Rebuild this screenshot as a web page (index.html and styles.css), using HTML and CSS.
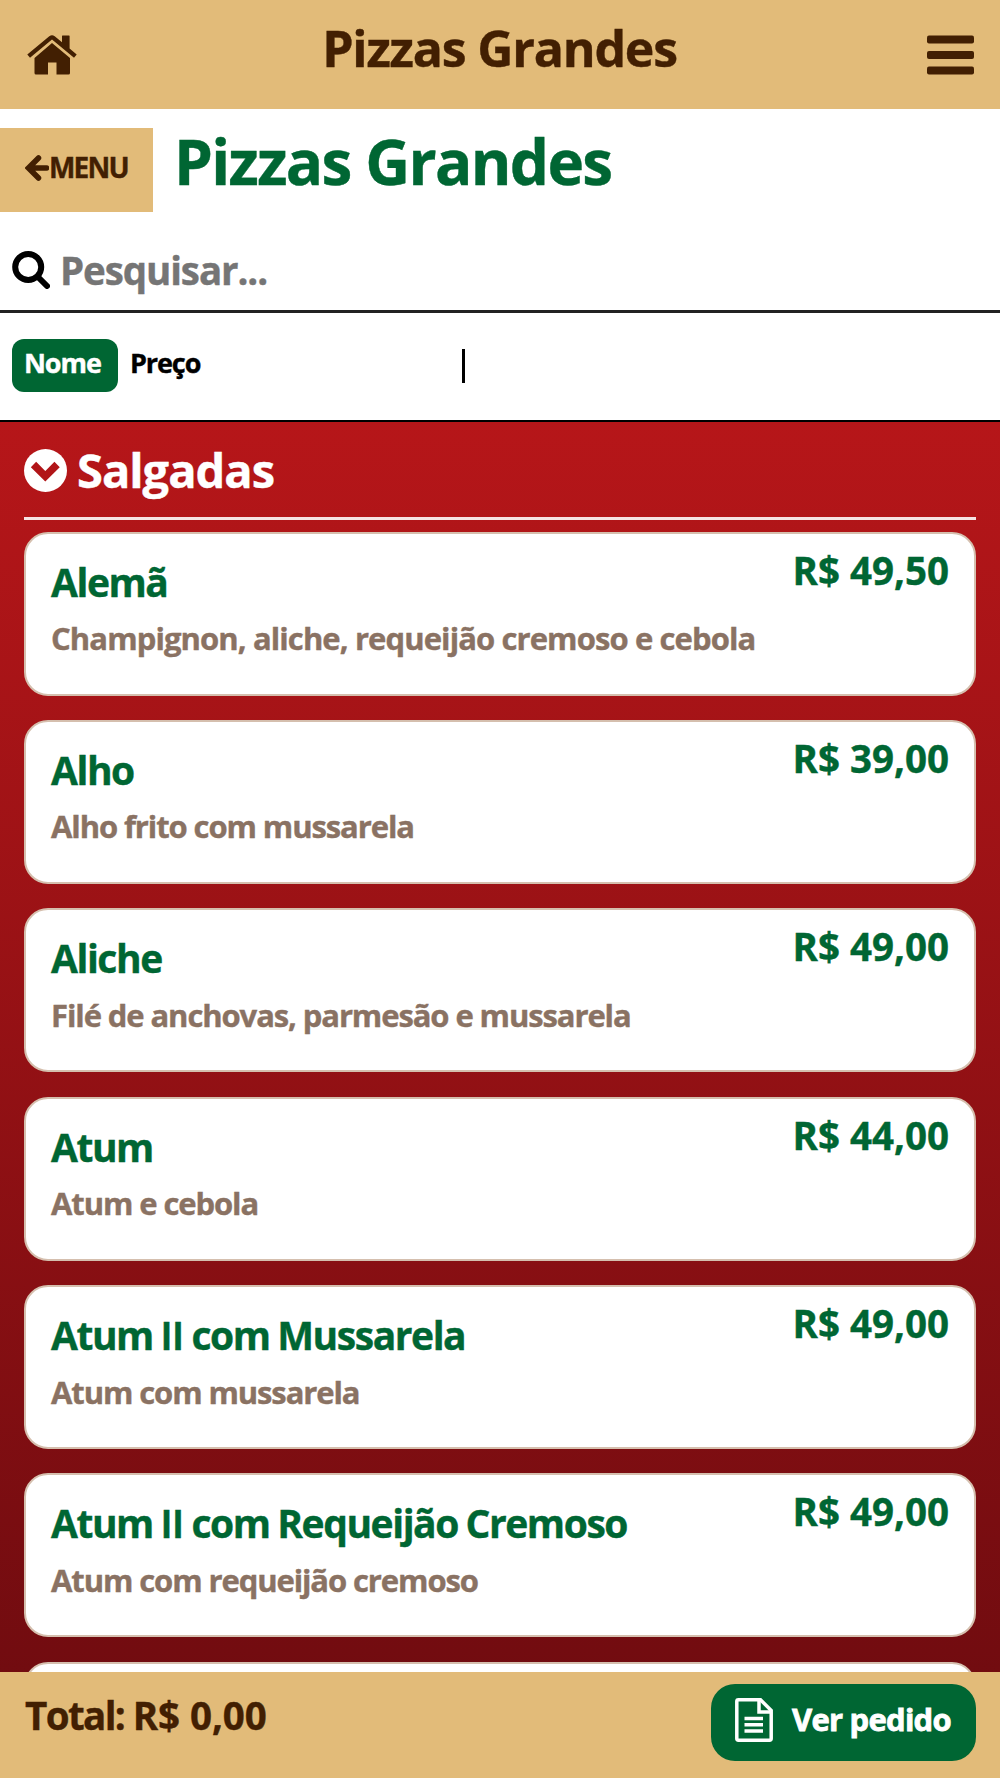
FILE: index.html
```html
<!DOCTYPE html>
<html lang="pt-BR">
<head>
  <meta charset="UTF-8" />
  <meta name="viewport" content="width=device-width, initial-scale=1.0"/>
  <title>Pizzas Grandes</title>
  <link rel="stylesheet" href="styles.css">
</head>
<body>

  <header class="topbar">
    <svg class="icon-home" viewBox="0 0 50 40">
      <path d="M25 8 L43 23 V38 Q43 39.5 41.5 39.5 H29.5 V27.5 H21 V39.5 H9 Q7.500 39.500 7.500 38 V23 Z"/>
      <path d="M0.300 19.500 L22.300 1.300 Q25 -0.700 27.700 1.300 L35 7.300 V1 Q35 0.500 35.500 0.500 H42 Q42.600 0.500 42.600 1 V13.500 L49.700 19.500 L47 22.800 L25 4.600 L3 22.800 Z"/>
    </svg>
    <span class="topbar-title">Pizzas Grandes</span>
    <svg class="icon-bars" viewBox="0 0 47 40">
      <rect x="0" y="0.500" width="47" height="8" rx="2"/>
      <rect x="0" y="16" width="47" height="8" rx="2"/>
      <rect x="0" y="31.500" width="47" height="8" rx="2"/>
    </svg>
  </header>

  <div class="heading">
    <button class="back">
      <svg class="icon-arrow" viewBox="0 0 24 26">
        <path d="M13.500 3 L3.500 13 L13.500 23 M4 13 H21.500"/>
      </svg><span>MENU</span>
    </button>
    <h1>Pizzas Grandes</h1>
  </div>

  <div class="search">
    <svg class="icon-search" viewBox="0 0 38 38">
      <circle cx="16.200" cy="16" r="13"/>
      <path d="M26 26 L35 35"/>
    </svg>
    <input type="text" placeholder="Pesquisar..." />
  </div>

  <div class="filters">
    <div class="sort">
      <span class="pill active">Nome</span>
      <span class="pill">Preço</span>
    </div>
    <span class="divider"></span>
  </div>

  <main class="list">
    <h2 class="category">
      <svg class="icon-down" viewBox="0 0 43 43">
        <circle cx="21.500" cy="21.500" r="21.500"/>
        <path d="M9.500 15.500 L21.300 27.300 L33.100 15.500"/>
      </svg>
      <span>Salgadas</span>
    </h2>

    <div class="card">
      <div class="info"><h3>Alemã</h3><p class="long">Champignon, aliche, requeijão cremoso e cebola</p></div>
      <span class="price">R$ 49,50</span>
    </div>
    <div class="card">
      <div class="info"><h3>Alho</h3><p>Alho frito com mussarela</p></div>
      <span class="price">R$ 39,00</span>
    </div>
    <div class="card">
      <div class="info"><h3>Aliche</h3><p>Filé de anchovas, parmesão e mussarela</p></div>
      <span class="price">R$ 49,00</span>
    </div>
    <div class="card">
      <div class="info"><h3>Atum</h3><p>Atum e cebola</p></div>
      <span class="price">R$ 44,00</span>
    </div>
    <div class="card">
      <div class="info"><h3>Atum <span class="roman">II</span> com Mussarela</h3><p>Atum com mussarela</p></div>
      <span class="price">R$ 49,00</span>
    </div>
    <div class="card">
      <div class="info"><h3>Atum <span class="roman">II</span> com Requeijão Cremoso</h3><p>Atum com requeijão cremoso</p></div>
      <span class="price">R$ 49,00</span>
    </div>
    <div class="card"></div>
  </main>

  <footer class="cart">
    <span class="total">Total: <span class="amount">R$ 0,00</span></span>
    <button class="order">
      <svg class="icon-file" viewBox="0 0 38 44">
        <path d="M3.500 1.800 H25.500 L36.200 12.500 V40.500 Q36.200 42.200 34.500 42.200 H3.500 Q1.800 42.200 1.800 40.500 V3.500 Q1.800 1.800 3.500 1.800 Z"/>
        <path d="M24 2 V14 H36"/>
        <path d="M9.500 20.500 H28 M9.500 26.700 H28 M9.500 33 H28"/>
      </svg>
      <span>Ver pedido</span>
    </button>
  </footer>

</body>
</html>
```
FILE: styles.css
```css
* {
  box-sizing: border-box;
}
body {
  margin: 0;
  height: 1778px;
  overflow: hidden;
  background: #fff;
  font-family: "Open Sans", "Noto Sans", sans-serif;
  font-weight: 700;
  -webkit-text-stroke: 0.4px;
  color: #000;
}
h1, h2, h3, p {
  margin: 0;
  font-weight: 700;
}
button {
  border: none;
  font: inherit;
  cursor: pointer;
}
svg {
  display: block;
  flex: none;
}
.topbar {
  display: flex;
  justify-content: space-between;
  height: 108.5px;
  padding: 0 26px 0 27px;
  background: #e2bb79;
  color: #421f02;
}
.topbar-title {
  margin-right: 5px;
  font-size: 50px;
  line-height: 96px;
  letter-spacing: -1.2px;
}
.icon-home {
  width: 50px;
  height: 40px;
  margin-top: 35px;
  fill: #421f02;
}
.icon-bars {
  width: 47px;
  height: 40px;
  margin-top: 35px;
  fill: #421f02;
}
.heading {
  display: flex;
  height: 122px;
}
.back {
  display: flex;
  align-items: center;
  width: 153px;
  height: 84px;
  margin-top: 19.5px;
  padding: 0 0 6px 25px;
  background: #e2bb79;
  color: #421f02;
  font-size: 28px;
  letter-spacing: -1.8px;
}
.icon-arrow {
  width: 24px;
  height: 26px;
  margin-top: 2px;
  fill: none;
  stroke: #421f02;
  stroke-width: 5.5;
  stroke-linecap: round;
}
h1 {
  margin: 10px 0 0 21px;
  font-size: 62px;
  line-height: 84px;
  letter-spacing: -1.65px;
  color: #006633;
}
.search {
  display: flex;
  align-items: center;
  height: 82px;
  padding-left: 12px;
  gap: 7px;
  border-bottom: 3px solid #222;
}
.icon-search {
  width: 38px;
  height: 38px;
  fill: none;
  stroke: #000;
  stroke-width: 6;
  stroke-linecap: round;
}
.search input {
  flex: 1;
  border: none;
  outline: none;
  padding: 0 0 0 3px;
  font: inherit;
  font-size: 38.5px;
  letter-spacing: -1.1px;
}
.search input::placeholder {
  color: #757575;
}
.filters {
  display: flex;
  align-items: center;
  height: 109px;
  padding-left: 12px;
  border-bottom: 2px solid #000;
}
.sort {
  display: flex;
  width: 450px;
  margin-top: -1px;
}
.pill {
  height: 53px;
  padding: 0 0 0 12px;
  border-radius: 12px;
  font-size: 27px;
  line-height: 47px;
  letter-spacing: -1.1px;
}
.pill.active {
  width: 106px;
  background: #006633;
  color: #fff;
}
.divider {
  width: 2.5px;
  height: 34px;
  background: #000;
}
.list {
  height: 1356.5px;
  padding: 0 24px;
  background: linear-gradient(#b61619, #6c0b0f);
}
.category {
  display: flex;
  align-items: center;
  gap: 10px;
  height: 98px;
  margin-bottom: 12px;
  border-bottom: 3px solid #f6e4e4;
  font-size: 47px;
  letter-spacing: -1px;
  color: #fff;
}
.category span {
  margin-top: 2px;
}
.icon-down {
  width: 43px;
  height: 43px;
  margin-top: 2px;
}
.icon-down circle {
  fill: #fff;
}
.icon-down path {
  fill: none;
  stroke: #b11518;
  stroke-width: 7.5;
}
.card {
  display: flex;
  justify-content: space-between;
  height: 164px;
  margin-bottom: 24.4px;
  padding: 0 25px;
  background: #fff;
  border: 2px solid #d5bfae;
  border-radius: 24px;
}
.info h3 {
  margin-top: 22px;
  font-size: 39px;
  line-height: 52px;
  letter-spacing: -1.45px;
  word-spacing: -1px;
  color: #006633;
}
.roman {
  font-family: Lato, sans-serif;
  letter-spacing: 0;
}
.info p {
  margin-top: 9.5px;
  font-size: 31px;
  line-height: 42px;
  letter-spacing: -1.1px;
  color: #8a7263;
}
.info p.long {
  letter-spacing: -0.9px;
}
.price {
  margin-top: 12px;
  font-size: 38.5px;
  line-height: 48px;
  white-space: nowrap;
  color: #006633;
}
.cart {
  position: fixed;
  left: 0;
  right: 0;
  bottom: 0;
  display: flex;
  justify-content: space-between;
  height: 106.5px;
  padding: 12px 24px 0 25px;
  background: #e2bb79;
}
.total {
  font-size: 38.5px;
  line-height: 62px;
  letter-spacing: -1.6px;
  color: #421f02;
}
.amount {
  letter-spacing: -0.05px;
}
.order {
  display: flex;
  align-items: center;
  width: 265px;
  height: 77px;
  padding: 0 0 0 24px;
  gap: 19px;
  border-radius: 24px;
  background: #006633;
  color: #fff;
  font-size: 31px;
  letter-spacing: -0.75px;
  -webkit-text-stroke: 0.8px;
}
.order span {
  margin-top: -6px;
}
.icon-file {
  width: 38px;
  height: 44px;
  margin-top: -4px;
  fill: none;
  stroke: #fff;
  stroke-width: 3.5;
}
```
